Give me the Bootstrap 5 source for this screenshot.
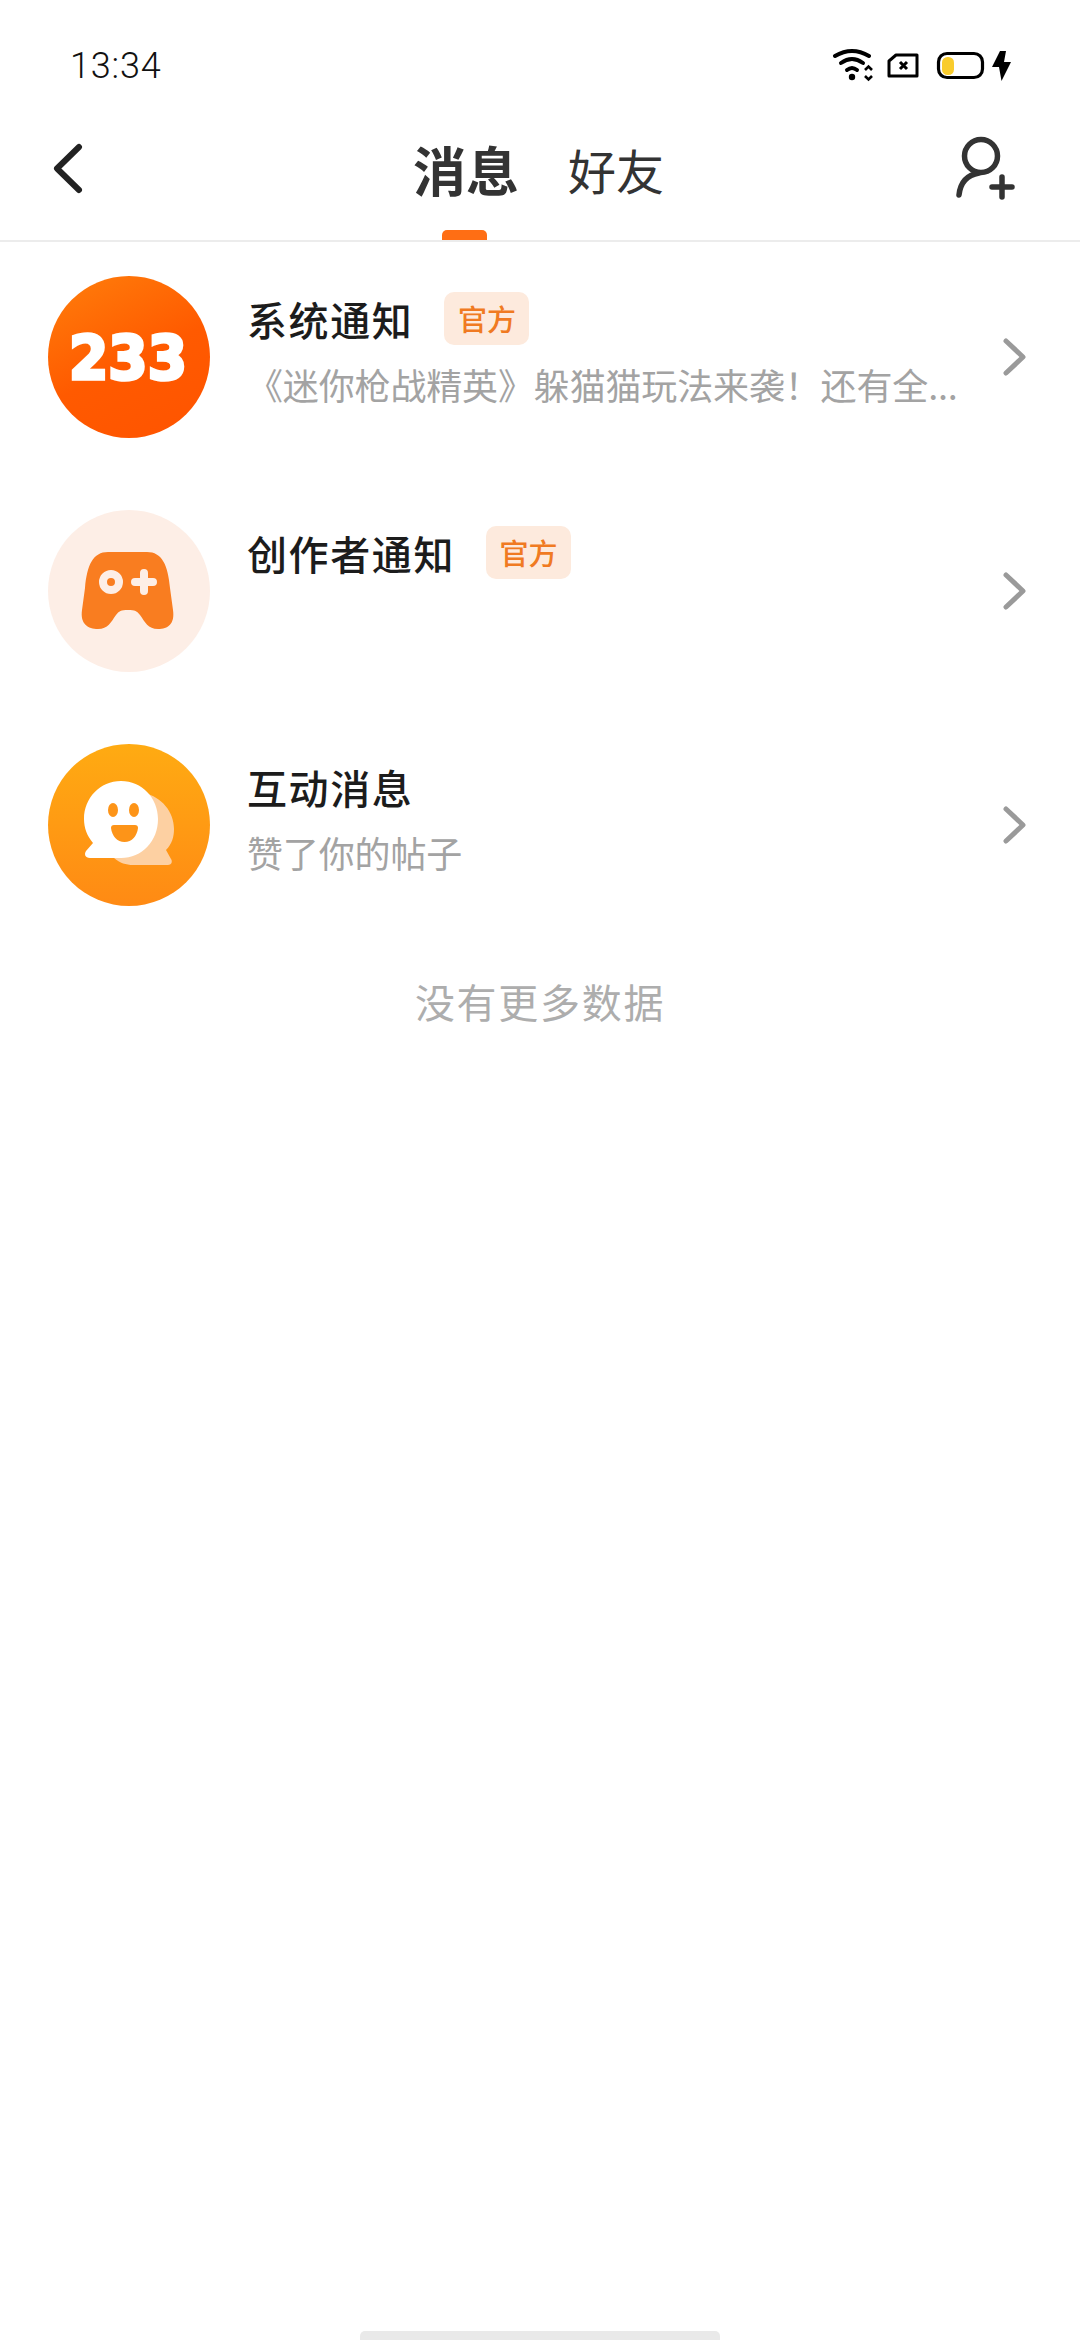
<!DOCTYPE html>
<html lang="zh-CN">
<head>
  <meta charset="UTF-8">
  <meta name="viewport" content="width=device-width, initial-scale=1.0">
  <title>消息</title>
  <link href="https://cdn.jsdelivr.net/npm/bootstrap@5.3.0/dist/css/bootstrap.min.css" rel="stylesheet">
  <style>
    html, body { height: 100%; }
    body {
      background: #fff;
      color: #1c1c1c;
      font-family: "Noto Sans CJK SC", "Noto Sans", sans-serif;
    }
    .screen { width: 1080px; height: 2340px; }
    .status-bar { height: 132px; padding: 0 68px 0 70px; }
    .status-time { font-family: Roboto, sans-serif; font-weight: 300; font-size: 36px; letter-spacing: .8px; color: #111; }
    .top-nav { height: 110px; border-bottom: 2px solid #ececec; padding: 0 65px 34px 48px; }
    .back-btn, .add-btn { background: none; border: 0; padding: 0; line-height: 0; }
    .tab-group { left: 413px; top: 0; height: 108px; gap: 49px; }
    .tab-on { font-size: 53px; font-weight: 700; color: #333; line-height: 60px; margin-bottom: 34px; }
    .tab-off { font-size: 48px; font-weight: 400; color: #333; line-height: 60px; margin-bottom: 34px; }
    .tab-mark { left: 29px; bottom: 0; width: 45px; height: 10px; background: #ff6e14; border-radius: 5px 5px 0 0; }
    .msg-list { padding-top: 34px; }
    .msg-row { height: 162px; margin-bottom: 72px; padding: 0 52px 0 48px; }
    .msg-avatar { width: 162px; height: 162px; flex: none; }
    .msg-body { width: 716px; margin-left: 37px; min-width: 0; }
    .msg-title { font-size: 40px; font-weight: 500; line-height: 54px; letter-spacing: 1.6px; color: #1c1c1c; }
    .msg-head { height: 54px; margin-top: 16px; }
    .tag-official {
      font-size: 29px; font-weight: 500; line-height: 53px; width: 85px; height: 53px; text-align: center;
      background: #fdeadd; color: #f07a22; border-radius: 10px; margin-left: 31px; margin-top: -2px;
    }
    .msg-desc { font-size: 36px; line-height: 50px; color: #a3a3a3; margin-top: 13px; white-space: nowrap; letter-spacing: -.15px; }
    .list-end { font-size: 40px; line-height: 56px; color: #adadad; margin-top: -5px; letter-spacing: 1.7px; }
    .home-bar { left: 360px; bottom: 0; width: 360px; height: 9px; background: #e9e9e9; border-radius: 5px 5px 0 0; }
  </style>
</head>
<body>
<div class="screen position-relative overflow-hidden">

  <!-- status bar -->
  <div class="status-bar d-flex align-items-center justify-content-between">
    <span class="status-time">13:34</span>
    <svg width="186" height="36" viewBox="0 0 186 36">
      <!-- wifi -->
      <g fill="none" stroke="#000" stroke-width="4" stroke-linecap="round">
        <path d="M9 8 Q26 -2 43 8"/>
        <path d="M15 15 Q26 7 37 15"/>
        <path d="M21 22 Q26 18 31 22"/>
      </g>
      <circle cx="26" cy="29" r="3.2" fill="#000"/>
      <path d="M39 22 l3.500 -3.500 l3.500 3.500 M39 28 l3.500 3.500 l3.500 -3.500" fill="none" stroke="#000" stroke-width="2.6"/>
      <!-- sim -->
      <path d="M63 13 L70 7 H91 V28 H63 Z" fill="none" stroke="#000" stroke-width="3" stroke-linejoin="round"/>
      <path d="M74 14 l7 7 M81 14 l-7 7" stroke="#000" stroke-width="3"/>
      <!-- battery -->
      <rect x="112.500" y="5.500" width="44" height="24" rx="8.500" fill="none" stroke="#000" stroke-width="3.200"/>
      <rect x="116" y="9" width="12" height="18" rx="5.500" fill="#f9cc2c"/>
      <!-- bolt -->
      <path d="M174 3 L166 19 H173 L175.500 33 L185 14 H178 L180 3 Z" fill="#000"/>
    </svg>
  </div>

  <!-- nav -->
  <div class="top-nav position-relative d-flex align-items-center justify-content-between">
    <button class="back-btn" type="button" aria-label="返回">
      <svg width="38" height="52" viewBox="0 0 38 52"><path d="M31 4 L9 25.500 L31 47" fill="none" stroke="#222" stroke-width="6" stroke-linecap="round" stroke-linejoin="round"/></svg>
    </button>
    <div class="tab-group position-absolute d-flex align-items-center">
      <div class="position-relative h-100 d-flex align-items-center">
        <span class="tab-on">消息</span>
        <span class="tab-mark position-absolute"></span>
      </div>
      <span class="tab-off">好友</span>
    </div>
    <button class="add-btn" type="button" aria-label="添加好友">
      <svg width="60" height="66" viewBox="0 0 60 66">
        <g fill="none" stroke="#333" stroke-width="5.500" stroke-linecap="round">
          <circle cx="26" cy="20" r="16.500"/>
          <path d="M24 37 Q6 40 4 59"/>
          <path d="M37 51 H57 M47 41 V61"/>
        </g>
      </svg>
    </button>
  </div>

  <!-- list -->
  <div class="msg-list">
    <div class="msg-row d-flex align-items-start">
      <svg class="msg-avatar" viewBox="0 0 162 162">
        <defs>
          <linearGradient id="avatarRed" x1="0.2" y1="0" x2="0.7" y2="1"><stop offset="0" stop-color="#ff7a0a"/><stop offset=".55" stop-color="#ff5a00"/><stop offset="1" stop-color="#ff5500"/></linearGradient>
          <linearGradient id="avatarAmber" x1="0.5" y1="0" x2="0.5" y2="1"><stop offset="0" stop-color="#ffab12"/><stop offset="1" stop-color="#ff8a14"/></linearGradient>
        </defs>
        <circle cx="81" cy="81" r="81" fill="url(#avatarRed)"/>
        <text x="80" y="103" text-anchor="middle" textLength="118" lengthAdjust="spacingAndGlyphs" font-family="DejaVu Sans, sans-serif" font-weight="700" font-size="60" fill="#fff" stroke="#fff" stroke-width="3.500">233</text>
      </svg>
      <div class="msg-body">
        <div class="msg-head d-flex align-items-center">
          <span class="msg-title">系统通知</span>
          <span class="tag-official">官方</span>
        </div>
        <div class="msg-desc">《迷你枪战精英》躲猫猫玩法来袭！还有全...</div>
      </div>
      <svg class="ms-auto align-self-center" width="26" height="40" viewBox="0 0 26 40"><path d="M4 4 L21 20 L4 36" fill="none" stroke="#9a9a9a" stroke-width="5" stroke-linecap="round" stroke-linejoin="round"/></svg>
    </div>

    <div class="msg-row d-flex align-items-start">
      <svg class="msg-avatar" viewBox="0 0 162 162">
        <circle cx="81" cy="81" r="81" fill="#fdeee6"/>
        <path d="M60 42 H99 C114 42 120 55 122 78 L125 100 C127 114 120 119 110 119 C100 119 97 112 92 105 C89 101 87 100 80 100 C73 100 71 101 68 105 C63 112 60 119 50 119 C40 119 32 114 34 100 L37 78 C39 55 45 42 60 42 Z" fill="#f97d20"/>
        <circle cx="63" cy="72" r="8" fill="none" stroke="#fdeee6" stroke-width="8"/>
        <path d="M87 72 H105 M96 63 V81" stroke="#fdeee6" stroke-width="8" stroke-linecap="round"/>
      </svg>
      <div class="msg-body">
        <div class="msg-head d-flex align-items-center">
          <span class="msg-title">创作者通知</span>
          <span class="tag-official">官方</span>
        </div>
      </div>
      <svg class="ms-auto align-self-center" width="26" height="40" viewBox="0 0 26 40"><path d="M4 4 L21 20 L4 36" fill="none" stroke="#9a9a9a" stroke-width="5" stroke-linecap="round" stroke-linejoin="round"/></svg>
    </div>

    <div class="msg-row d-flex align-items-start">
      <svg class="msg-avatar" viewBox="0 0 162 162">
        <circle cx="81" cy="81" r="81" fill="url(#avatarAmber)"/>
        <path d="M96 49 C114 53 126 68 126 85 C126 93 124 100 118 106 L123 115 C125 118 123 121 120 121 H85 C78 121 72 119 66 114 Z" fill="#fdd0a2"/>
        <path d="M73 37 C94 37 110 54 110 75 C110 97 94 114 73 114 H42 C37 114 36 110 38 107 L45 99 C39 92 36 84 36 75 C36 54 52 37 73 37 Z" fill="#fff"/>
        <ellipse cx="65" cy="66" rx="5" ry="7" fill="#fd9418"/>
        <ellipse cx="86" cy="66" rx="5" ry="7" fill="#fd9418"/>
        <path d="M66 81 H87 C89 81 90 82 90 84 C89 92 84 98 76.500 98 C69 98 64 92 63 84 C63 82 64 81 66 81 Z" fill="#fd9418"/>
      </svg>
      <div class="msg-body">
        <div class="msg-head d-flex align-items-center">
          <span class="msg-title">互动消息</span>
        </div>
        <div class="msg-desc">赞了你的帖子</div>
      </div>
      <svg class="ms-auto align-self-center" width="26" height="40" viewBox="0 0 26 40"><path d="M4 4 L21 20 L4 36" fill="none" stroke="#9a9a9a" stroke-width="5" stroke-linecap="round" stroke-linejoin="round"/></svg>
    </div>
  </div>

  <div class="list-end text-center">没有更多数据</div>

  <div class="home-bar position-absolute"></div>
</div>
<script src="https://cdn.jsdelivr.net/npm/bootstrap@5.3.0/dist/js/bootstrap.bundle.min.js"></script>
</body>
</html>
